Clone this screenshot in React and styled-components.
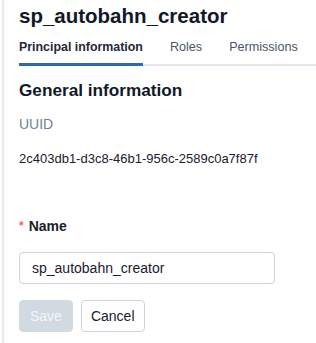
import styled, { createGlobalStyle } from "styled-components";

const Global = createGlobalStyle`
  body {
    margin: 0;
    background: #fff;
    font-family: "Liberation Sans", Arial, sans-serif;
    color: #1a202c;
  }
`;

const Page = styled.div`
  height: 343px;
  border-left: 2px solid #e6e9ee;
  margin-left: 2px;
  padding: 0 0 0 15px;
  overflow: hidden;
`;

const Title = styled.h1`
  margin: 0;
  padding-top: 1px;
  font-size: 20.5px;
  font-weight: 600;
  line-height: 30px;
  color: #111827;
`;

const TabList = styled.div`
  display: flex;
  gap: 27px;
  margin-top: 5px;
  border-bottom: 2px solid #e2e8f0;
`;

const Tab = styled.div`
  white-space: nowrap;
  font-size: ${(p) => (p.active ? 12.4 : 12.6)}px;
  font-weight: ${(p) => (p.active ? 600 : 400)};
  color: ${(p) => (p.active ? "#1f2937" : "#4a5568")};
  line-height: 18px;
  padding: 2px 0 7px;
  margin-bottom: -2px;
  border-bottom: 3px solid ${(p) => (p.active ? "#2b6cb0" : "transparent")};
`;

const Heading = styled.h2`
  margin: 11px 0 0;
  font-size: 17.2px;
  font-weight: 600;
  line-height: 26px;
  color: #111827;
`;

const Label = styled.div`
  margin-top: 11px;
  font-size: 14px;
  color: #718096;
  line-height: 20px;
`;

const Value = styled.div`
  margin-top: 15px;
  font-size: 13px;
  color: #1a202c;
  line-height: 20px;
`;

const FieldLabel = styled.div`
  margin-top: 47px;
  display: flex;
  align-items: center;
  gap: 5px;
  font-size: 14px;
  font-weight: 600;
  color: #1a202c;
  line-height: 20px;
`;

const Star = styled.span`
  color: #f56565;
  font-size: 12px;
  font-weight: 700;
`;

const Input = styled.input`
  display: block;
  box-sizing: border-box;
  margin-top: 16px;
  width: 256px;
  height: 32px;
  padding: 0 12px;
  border: 1px solid #cbd5e0;
  border-radius: 4px;
  font-family: inherit;
  font-size: 14px;
  color: #1a202c;
  outline: none;
`;

const Actions = styled.div`
  display: flex;
  gap: 8px;
  margin-top: 16px;
`;

const Button = styled.button`
  box-sizing: border-box;
  height: 32px;
  padding: 0 ${(p) => (p.primary ? 10 : 9)}px;
  border-radius: 4px;
  font-family: inherit;
  font-size: 14px;
  border: 1px solid ${(p) => (p.primary ? "#d1d9e1" : "#cbd5e0")};
  background: ${(p) => (p.primary ? "#d1d9e1" : "#fff")};
  color: ${(p) => (p.primary ? "#f4f6f8" : "#1a202c")};
`;

export default function App() {
  return (
    <>
      <Global />
      <Page>
        <Title>sp_autobahn_creator</Title>
        <TabList>
          <Tab active>Principal information</Tab>
          <Tab>Roles</Tab>
          <Tab>Permissions</Tab>
        </TabList>
        <Heading>General information</Heading>
        <Label>UUID</Label>
        <Value>2c403db1-d3c8-46b1-956c-2589c0a7f87f</Value>
        <FieldLabel>
          <Star>*</Star>
          Name
        </FieldLabel>
        <Input defaultValue="sp_autobahn_creator" />
        <Actions>
          <Button primary disabled>Save</Button>
          <Button>Cancel</Button>
        </Actions>
      </Page>
    </>
  );
}
